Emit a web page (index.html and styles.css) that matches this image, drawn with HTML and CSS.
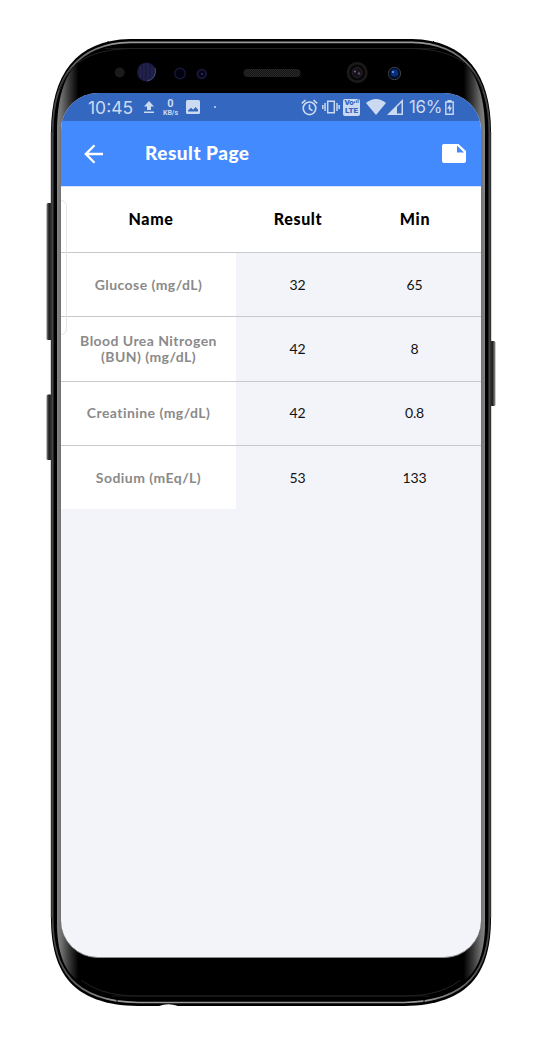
FILE: index.html
```html
<!DOCTYPE html>
<html lang="en">
<head>
<meta charset="utf-8">
<title>Result Page</title>
<link rel="stylesheet" href="styles.css">
</head>
<body>
<div class="stage">
  <svg class="device" viewBox="0 0 542 1051" aria-hidden="true">
    <defs>
      <linearGradient id="edge" gradientUnits="userSpaceOnUse" x1="57" y1="0" x2="485" y2="0">
        <stop offset="0" stop-color="#858585"/><stop offset=".01" stop-color="#707070"/><stop offset=".03" stop-color="#333"/><stop offset=".05" stop-color="#000"/>
        <stop offset=".95" stop-color="#000"/><stop offset=".97" stop-color="#333"/><stop offset=".99" stop-color="#707070"/><stop offset="1" stop-color="#858585"/>
      </linearGradient>
      <linearGradient id="metal" x1="0" y1="0" x2="1" y2="0">
        <stop offset="0" stop-color="#444"/><stop offset=".15" stop-color="#999"/><stop offset=".85" stop-color="#999"/><stop offset="1" stop-color="#444"/>
      </linearGradient>
      <linearGradient id="keyL" x1="0" y1="0" x2="1" y2="0"><stop offset="0" stop-color="#888"/><stop offset=".4" stop-color="#222"/><stop offset="1" stop-color="#1c1c1c"/></linearGradient>
      <linearGradient id="keyR" x1="0" y1="0" x2="1" y2="0"><stop offset="0" stop-color="#111"/><stop offset=".5" stop-color="#222"/><stop offset="1" stop-color="#999"/></linearGradient>
      <pattern id="mesh" width="2" height="2" patternUnits="userSpaceOnUse"><path fill="#151515" d="M0 0h2v2H0z"/><path fill="#292929" d="M0 0h1v1H0zM1 1h1v1H1z"/></pattern>
    </defs>
    <rect x="46.5" y="203" width="6" height="137" rx="1.5" fill="url(#keyL)"/>
    <rect x="46.5" y="394.500" width="6" height="65.500" rx="1.500" fill="url(#keyL)"/>
    <rect x="489.500" y="341" width="6" height="65" rx="1.500" fill="url(#keyR)"/>
    <path d="M130 39H412C466 40 491 75 491 132V918C491 972 470 1005 404 1006H138C72 1005 51 972 51 918V132C51 75 76 40 130 39Z"/>
    <path d="M130 42.300H412C464 43.300 489.300 77 489.300 132V918C489.300 970 468 1001.500 404 1002.500H138C74 1001.500 52.700 970 52.700 918V132C52.700 77 78 43.300 130 42.300Z" fill="none" stroke="url(#metal)" stroke-width="1.700"/>
    <path d="M51.200 132V918M490.800 132V918" stroke="#555" stroke-width=".8"/>
    <path d="M105 48.500H437M112 996H430" stroke="#181818"/>
    <path d="M59 91C68 66 84 50 130 48.500H412C458 50 474 66 483 91M57 925C60 970 84 996 138 996H404C458 996 482 970 485 925" fill="none" stroke="#222"/>
    <path d="M108 41v3M433.500 41v3M108 1000v3M117 1000v3M424 1000v3M434 1000v3" stroke="#000"/>
    <path d="M57 132C57 99 64 77 77 63H465C478 77 485 99 485 132V922C485 952 478 970 465 980H77C64 970 57 952 57 922Z" fill="url(#edge)"/>
    <path d="M159 1006Q168 1002.500 178 1006Z" fill="#fff"/>
    <circle cx="119.700" cy="72.500" r="5" fill="#1b1a1d"/>
    <circle cx="146.500" cy="72" r="9.500" fill="#1b1b45"/>
    <path d="M140.500 66v12M144 64v16M148 64v16M152 66v12" stroke="#29294f" stroke-width="1"/>
    <path d="M155 68a10 10 0 0 1-8 13" fill="none" stroke="#46527a"/>
    <circle cx="180" cy="73.500" r="5.200" fill="#02020f" stroke="#171738" stroke-width="1.500"/>
    <circle cx="201.700" cy="74" r="4.300" fill="#06061a" stroke="#1a193b" stroke-width="1.800"/><circle cx="202" cy="74" r="1" fill="#39376b"/>
    <rect x="243.500" y="69" width="57" height="8" rx="4" fill="url(#mesh)"/>
    <circle cx="357.200" cy="72.500" r="9.300" fill="#080808" stroke="#1b1b1b" stroke-width="2.500"/><circle cx="357.200" cy="72.500" r="5" fill="#16111a" stroke="#29242d"/><circle cx="355" cy="71.500" r="1" fill="#756c7c"/><circle cx="359" cy="73.500" r="1.200" fill="#554b61"/>
    <circle cx="394.500" cy="73.500" r="6.200" fill="#020c24" stroke="#3d4147"/><circle cx="394.500" cy="73" r="3.800" fill="#062f80"/><circle cx="393" cy="72" r="1" fill="#79a9e9"/>
  </svg>

  <main class="screen">
    <div class="status">
      <span class="clock">10:45</span>
      <svg class="upload" width="10" height="13" viewBox="0 0 10 13"><path d="M5 0 10 5.500H7V9H3V5.500H0ZM0 10.500h10V12H0Z"/></svg>
      <span class="rate"><b>0</b><i>KB/s</i></span>
      <svg class="photo" width="14" height="14" viewBox="0 0 14 14"><path fill-rule="evenodd" d="M1.500 0h11Q14 0 14 1.500v11q0 1.500-1.500 1.500h-11Q0 14 0 12.500v-11Q0 0 1.500 0ZM2 11.500h10V9.500L9.500 7 7.200 9.800 5 7.800 2 10.500Z"/></svg>
      <span class="dot"></span>
      <svg class="alarm" width="17" height="17" viewBox="0 0 17 17"><g fill="none" stroke="currentColor" stroke-width="1.600"><circle cx="8.500" cy="9.300" r="6.300"/><path d="M8.500 5.500v4.200l3 2M.8 4.300 4.500 1.200M16.200 4.300 12.500 1.200"/></g></svg>
      <svg class="vibrate" width="18" height="14" viewBox="0 0 18 14"><path fill="none" stroke="currentColor" stroke-width="1.500" d="M5.700 1.200h6.600v11.600H5.700ZM3 3v8M15 3v8M.8 5v4M17.200 5v4"/></svg>
      <span class="volte"><b>Vo<svg width="5" height="4" viewBox="0 0 5 4"><path d="M0 2.500h1V4H0ZM1.800 1.200h1V4h-1ZM3.600 0h1v4h-1Z"/></svg></b><b class="lte">LTE</b></span>
      <svg class="wifi" width="20" height="16" viewBox="0 0 20 16"><path d="M0 4Q10-4 20 4L10 16Z"/></svg>
      <svg class="signal" width="16" height="16" viewBox="0 0 16 16"><path fill-rule="evenodd" d="M16 0v16H0ZM10 8v6.500h4.500V3.500Z"/></svg>
      <span class="percent">16%</span>
      <svg class="battery" width="9" height="15" viewBox="0 0 9 15"><path d="M2.500 0h4v2h-4Z"/><path fill="none" stroke="currentColor" stroke-width="1.400" d="M.8 2h7.400v12.200H.8Z"/><path d="M5.200 4 2 8.700h2.200V12.500L7 7.500H5.200Z"/></svg>
    </div>
    <header class="appbar">
      <svg class="back" width="20" height="20" viewBox="0 0 20 20"><path fill="none" stroke="#fff" stroke-width="2.300" d="M19 10H2M10.500 1.200 1.800 10l8.700 8.800"/></svg>
      <h1>Result Page</h1>
      <svg class="note" width="24" height="19" viewBox="0 0 24 19"><path fill="#fff" fill-rule="evenodd" d="M2 0h14.500L24 7v10q0 2-2 2H2q-2 0-2-2V2Q0 0 2 0ZM15 1.500v7h7Z"/></svg>
    </header>
    <section class="table">
      <div class="row head"><span>Name</span><span>Result</span><span>Min</span></div>
      <div class="row"><span class="name">Glucose (mg/dL)</span><span>32</span><span>65</span></div>
      <div class="row"><span class="name">Blood Urea Nitrogen<br>(BUN) (mg/dL)</span><span>42</span><span>8</span></div>
      <div class="row"><span class="name">Creatinine (mg/dL)</span><span>42</span><span>0.8</span></div>
      <div class="row"><span class="name">Sodium (mEq/L)</span><span>53</span><span>133</span></div>
      <div class="handle"></div>
    </section>
  </main>
</div>
</body>
</html>
```
FILE: styles.css
```css
* { box-sizing: border-box; }
body { margin: 0; background: #fff; font-family: Lato, sans-serif; }
.stage { position: relative; width: 542px; height: 1051px; padding: 93px 61px; }
.device { position: absolute; inset: 0; width: 542px; height: 1051px; }
.screen { position: relative; width: 420px; height: 865px; overflow: hidden; border-radius: 37px; background: #f3f4fa; border-bottom: 1px solid #8b8e91; }
.status { height: 28px; display: flex; align-items: center; padding-left: 27px; background: #3367c0; color: #ccdaf1; font-family: Inter, sans-serif; }
.status svg { fill: currentColor; flex: none; }
.clock { width: 46px; font-size: 17.500px; white-space: nowrap; }
.upload { margin-left: 10px; }
.rate { width: 17px; margin-left: 8px; display: flex; flex-direction: column; align-items: center; font-family: Roboto, sans-serif; }
.rate b { font-size: 11px; line-height: 11px; }
.rate i { font-size: 7px; line-height: 8px; font-style: normal; font-weight: 700; }
.photo { margin-left: 7px; }
.dot { width: 2px; height: 2px; margin-left: 14px; background: #ccdaf1; border-radius: 1px; }
.alarm { margin-left: 85px; }
.vibrate { margin-left: 4px; }
.volte { width: 17px; height: 17px; margin-left: 3px; border-radius: 2px; background: #ccdaf1; color: #3367c0; display: flex; flex-direction: column; align-items: center; justify-content: center; font-family: Roboto, sans-serif; }
.volte b { display: flex; font-size: 8px; line-height: 8px; font-weight: 900; letter-spacing: -.2px; }
.volte .lte { font-size: 8px; letter-spacing: 0; }
.wifi { margin-left: 6px; }
.signal { margin-left: 1px; }
.percent { width: 33px; margin-left: 6px; font-size: 17px; letter-spacing: -.4px; }
.battery { margin-left: 3px; }
.appbar { height: 65px; display: flex; align-items: center; padding: 0 15px 0 23px; background: #448aff; color: #fff; }
.appbar h1 { flex: 1; margin: -2px 0 0 41px; font-size: 19px; line-height: 24px; font-weight: 900; letter-spacing: .5px; }
.table { position: relative; }
.row { display: grid; grid-template-columns: 175px 123px 111px; height: 64.300px; font-size: 14px; line-height: 16px; color: #111; border-top: 1px solid #c8c8cf; }
.row span { display: flex; align-items: center; justify-content: center; text-align: center; letter-spacing: -.2px; }
.row .name { background: #fff; color: #8a8a8a; font-weight: 700; letter-spacing: .45px; }
.row.head { height: 66px; border-top-color: #d5e2fa; background: #fff; color: #000; font-size: 16px; font-weight: 900; }
.row.head span { letter-spacing: .65px; padding: 0 0 2px 1px; }
.row.head span:first-child { padding-left: 5px; }
.handle { position: absolute; left: -6px; top: 14px; width: 12px; height: 135px; border: 1px solid #e4e4e4; border-radius: 6px; }
```
